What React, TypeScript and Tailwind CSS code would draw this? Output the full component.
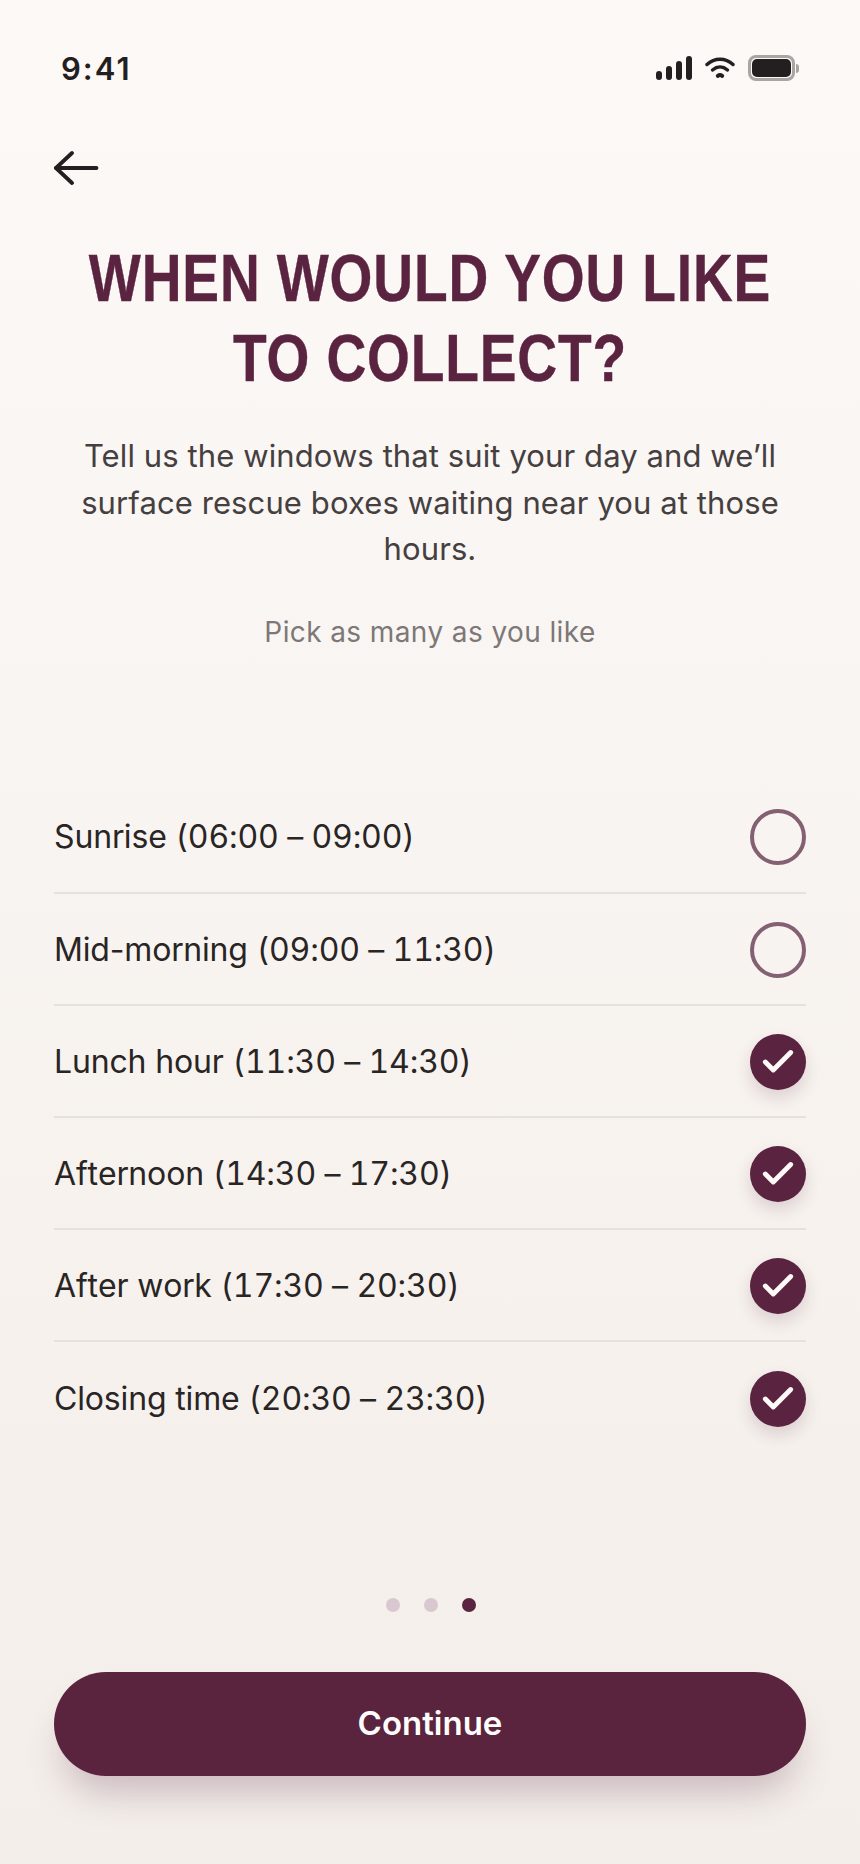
import { Check } from 'lucide-react';

const slots = [
  { name: 'Sunrise', time: '(06:00 – 09:00)', on: false },
  { name: 'Mid-morning', time: '(09:00 – 11:30)', on: false },
  { name: 'Lunch hour', time: '(11:30 – 14:30)', on: true },
  { name: 'Afternoon', time: '(14:30 – 17:30)', on: true },
  { name: 'After work', time: '(17:30 – 20:30)', on: true },
  { name: 'Closing time', time: '(20:30 – 23:30)', on: true },
];

const StatusIcons = () => (
  <div className="flex items-center gap-[13px]">
    {/* signal */}
    <svg width="36" height="24" viewBox="0 0 36 24" fill="#231f20">
      <rect x="0" y="15" width="6" height="9" rx="3" />
      <rect x="10" y="10" width="6" height="14" rx="3" />
      <rect x="20" y="5" width="6" height="19" rx="3" />
      <rect x="30" y="0" width="6" height="24" rx="3" />
    </svg>
    {/* wifi */}
    <svg width="30" height="22" viewBox="0 0 30 22" fill="none" stroke="#231f20" strokeWidth="3.4" strokeLinecap="round">
      <path d="M2 7.5C9.5 0.5 20.5 0.5 28 7.5" />
      <path d="M7.5 13c4.700-4 10.300-4 15 0" />
      <path d="M12.800 18.800c1.500-1.100 2.900-1.100 4.400 0" strokeWidth="4" />
    </svg>
    {/* battery */}
    <div className="flex items-center">
      <div className="w-[47px] h-[26px] rounded-[8px] border-[3px] border-[#a9a5a3] p-[1px]">
        <div className="w-full h-full rounded-[5px] bg-[#231f20]" />
      </div>
      <div className="w-[3px] h-[9px] rounded-r-full bg-[#a9a5a3] ml-[1px]" />
    </div>
  </div>
);

const App = () => {
  return (
    <div
      className="w-[860px] h-[1864px] flex flex-col overflow-hidden bg-linear-to-b from-[#fdf9f7] to-[#f3eee9]"
      style={{ fontFamily: "Inter, 'Noto Sans', sans-serif" }}
    >
      <div className="flex items-center justify-between pl-[61px] pr-[61px] pt-[48px] h-[88px]">
        <span className="text-[31px] leading-none font-semibold tracking-[2px] text-[#231f20]">9:41</span>
        <StatusIcons />
      </div>

      <div className="pl-[54px] pt-[62px] h-[100px]">
        <svg width="46" height="36" viewBox="0 0 46 36" fill="none" stroke="#231f20" strokeWidth="3.8" strokeLinecap="round" strokeLinejoin="round">
          <path d="M42.500 18H2" />
          <path d="M18 3 2 18l16 15" />
        </svg>
      </div>

      <h1
        className="mt-[50px] text-center text-[66px] leading-[80px] tracking-[1px] font-bold text-[#5a2340] uppercase scale-x-[0.835] [-webkit-text-stroke:0.4px_#5a2340]"
        style={{ fontFamily: "'Liberation Sans', Arial, sans-serif" }}
      >
        When would you like
        <br />
        to collect?
      </h1>

      <p className="mt-[35px] px-[60px] text-center text-[31px] leading-[46.5px] tracking-[0.1px] text-[#45403f]">
        Tell us the windows that suit your day and we’ll surface rescue boxes waiting near you at those hours.
      </p>
      <p className="mt-[39px] text-center text-[28px] leading-[40px] tracking-[0.4px] text-[#7d7877]">Pick as many as you like</p>

      <ul className="mt-[130px] mx-[54px]">
        {slots.map((s, i) => (
          <li
            key={s.name}
            className={`flex items-center justify-between h-[112px] ${i > 0 ? 'pt-[2px]' : ''} ${i < slots.length - 1 ? 'border-b-2 border-[#e5e1dc]' : ''}`}
          >
            <span className="text-[32px] tracking-[-0.15px] text-[#292524] [font-kerning:none]">
              {s.name} <span className="tabular-nums">{s.time}</span>
            </span>
            {s.on ? (
              <span className="w-[56px] h-[56px] rounded-full bg-[#5a2340] flex items-center justify-center shadow-[0_8px_16px_rgba(90,35,64,0.16)]">
                <Check className="w-[38px] h-[38px] text-[#fdf9f7]" strokeWidth={3.1} />
              </span>
            ) : (
              <span className="w-[56px] h-[56px] rounded-full border-[4px] border-[#846073]" />
            )}
          </li>
        ))}
      </ul>

      <div className="mt-[144px] ml-[2px] flex justify-center gap-[24px]">
        <span className="w-[14px] h-[14px] rounded-full bg-[#d9c8d0]" />
        <span className="w-[14px] h-[14px] rounded-full bg-[#d9c8d0]" />
        <span className="w-[14px] h-[14px] rounded-full bg-[#5a2340]" />
      </div>

      <button className="mt-[60px] mx-[54px] h-[104px] rounded-full bg-[#5a233e] text-[#fffdfc] text-[33px] font-semibold shadow-[0_26px_36px_-10px_rgba(90,35,64,0.26)]">
        Continue
      </button>
    </div>
  );
};

export default App;
